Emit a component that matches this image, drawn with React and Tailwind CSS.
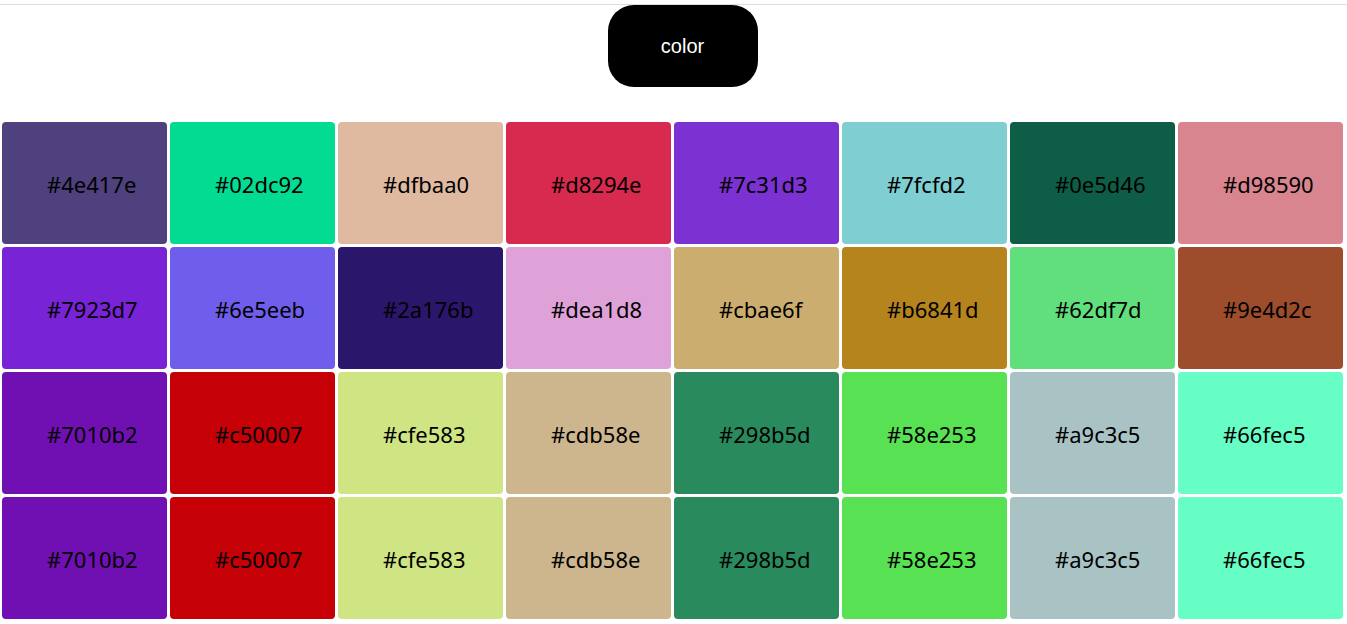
const rows = [
  ['#4e417e', '#02dc92', '#dfbaa0', '#d8294e', '#7c31d3', '#7fcfd2', '#0e5d46', '#d98590'],
  ['#7923d7', '#6e5eeb', '#2a176b', '#dea1d8', '#cbae6f', '#b6841d', '#62df7d', '#9e4d2c'],
  ['#7010b2', '#c50007', '#cfe583', '#cdb58e', '#298b5d', '#58e253', '#a9c3c5', '#66fec5'],
  ['#7010b2', '#c50007', '#cfe583', '#cdb58e', '#298b5d', '#58e253', '#a9c3c5', '#66fec5'],
];

export default function App() {
  const colors = rows.flat();
  return (
    <div className="min-h-screen bg-white">
      <div className="h-[4px]" />
      <div className="border-t border-[#dddddd]" />
      <div className="flex justify-center pl-[18px]">
        <button
          type="button"
          className="flex h-[82px] w-[150px] items-center justify-center rounded-[26px] bg-black text-[20px] text-white"
          style={{ fontFamily: '"Liberation Sans", Arial, sans-serif' }}
        >
          color
        </button>
      </div>
      <div className="mt-[35px] grid grid-cols-[repeat(8,165px)] gap-[3px] px-[2px]">
        {colors.map((c, i) => (
          <div
            key={i}
            className="flex h-[122px] items-center rounded-[4px] pl-[45px] pt-[3px] text-[22px] text-black"
            style={{ backgroundColor: c, fontFamily: '"Noto Sans", "Open Sans", sans-serif' }}
          >
            {c}
          </div>
        ))}
      </div>
    </div>
  );
}
